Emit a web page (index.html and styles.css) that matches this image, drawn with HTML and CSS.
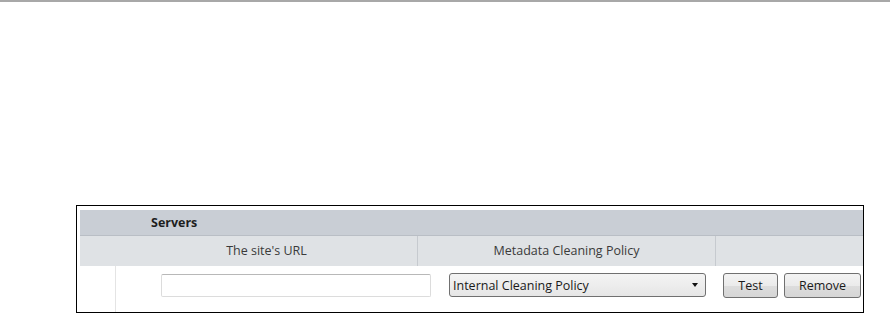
FILE: index.html
```html
<!DOCTYPE html>
<html>
<head>
<meta charset="utf-8">
<link rel="stylesheet" href="styles.css">
</head>
<body>
<div class="topline"></div>
<div class="panel">
  <div class="inner">
    <div class="section-title">Servers</div>
    <div class="grid">
      <div class="th th-url">The site's URL</div>
      <div class="th th-policy">Metadata Cleaning Policy</div>
      <div class="th th-actions"></div>
      <div class="td td-gutter"></div>
      <div class="td td-url"><input class="url-input" type="text"></div>
      <div class="td td-policy">
        <span class="select-wrap">
          <select class="policy-select"><option>Internal Cleaning Policy</option></select>
        </span>
      </div>
      <div class="td td-actions">
        <button class="btn btn-test">Test</button>
        <button class="btn btn-remove">Remove</button>
      </div>
    </div>
  </div>
</div>
</body>
</html>
```

FILE: styles.css
```css
html, body {
  margin: 0;
  padding: 0;
  background: #fff;
  font-family: "Open Sans", "Noto Sans", sans-serif;
  font-size: 12.5px;
  color: #333;
}
.topline {
  height: 2px;
  background: #a8a8a8;
}
.panel {
  margin: 203px 0 0 76px;
  width: 786px;
  height: 106px;
  border: 1px solid #000;
}
.inner {
  padding: 4px 0 0 3px;
  height: 102px;
  display: flex;
  flex-direction: column;
}
.section-title {
  height: 25px;
  background: #c9ced5;
  border-bottom: 1px solid #b9bec5;
  font-weight: bold;
  color: #1e1e1e;
  padding-left: 71px;
  line-height: 25px;
}
.grid {
  display: grid;
  grid-template-columns: 36px 302px 298px 147px;
  grid-template-rows: 30px 1fr;
  flex: 1;
}
.th {
  background: #dfe2e5;
  line-height: 30px;
  text-align: center;
  color: #3a3a3a;
}
.th-url {
  grid-column: 1 / span 2;
  padding-left: 36px;
  border-right: 1px solid #c6cacf;
}
.th-policy {
  border-right: 1px solid #c6cacf;
}
.td-gutter {
  border-right: 1px solid #e4e4e4;
}
.td {
  display: flex;
  align-items: flex-start;
  min-width: 0;
}
.td-url {
  padding: 8px 0 0 45px;
}
.url-input {
  flex-shrink: 0;
  width: 270px;
  height: 23px;
  box-sizing: border-box;
  border: 1px solid #dcdcdc;
  border-top-color: #b8b8b8;
  border-radius: 2px;
  margin: 0;
  padding: 0 4px;
  font: inherit;
  background: #fff;
}
.td-policy {
  padding: 7px 0 0 31px;
}
.select-wrap {
  position: relative;
  display: inline-block;
}
.select-wrap::after {
  content: "";
  position: absolute;
  right: 8px;
  top: 10px;
  border-left: 3.5px solid transparent;
  border-right: 3.5px solid transparent;
  border-top: 4px solid #111;
  pointer-events: none;
}
.policy-select {
  -webkit-appearance: none;
  appearance: none;
  width: 257px;
  height: 24px;
  box-sizing: border-box;
  margin: 0;
  padding: 0 0 0 3px;
  border: 1px solid #707070;
  border-radius: 3px;
  background: linear-gradient(#f4f4f4, #e6e6e6);
  font: inherit;
  color: #1a1a1a;
  outline: none;
}
.td-actions {
  padding: 7px 0 0 7px;
  gap: 6px;
}
.btn {
  flex-shrink: 0;
  height: 25px;
  box-sizing: border-box;
  margin: 0;
  padding: 0;
  border: 1px solid #707070;
  border-radius: 3px;
  background: linear-gradient(#f3f3f3 0%, #ebebeb 50%, #dddddd 51%, #d6d6d6 100%);
  font: inherit;
  color: #1a1a1a;
}
.btn-test { width: 55px; }
.btn-remove { width: 77px; }
```
